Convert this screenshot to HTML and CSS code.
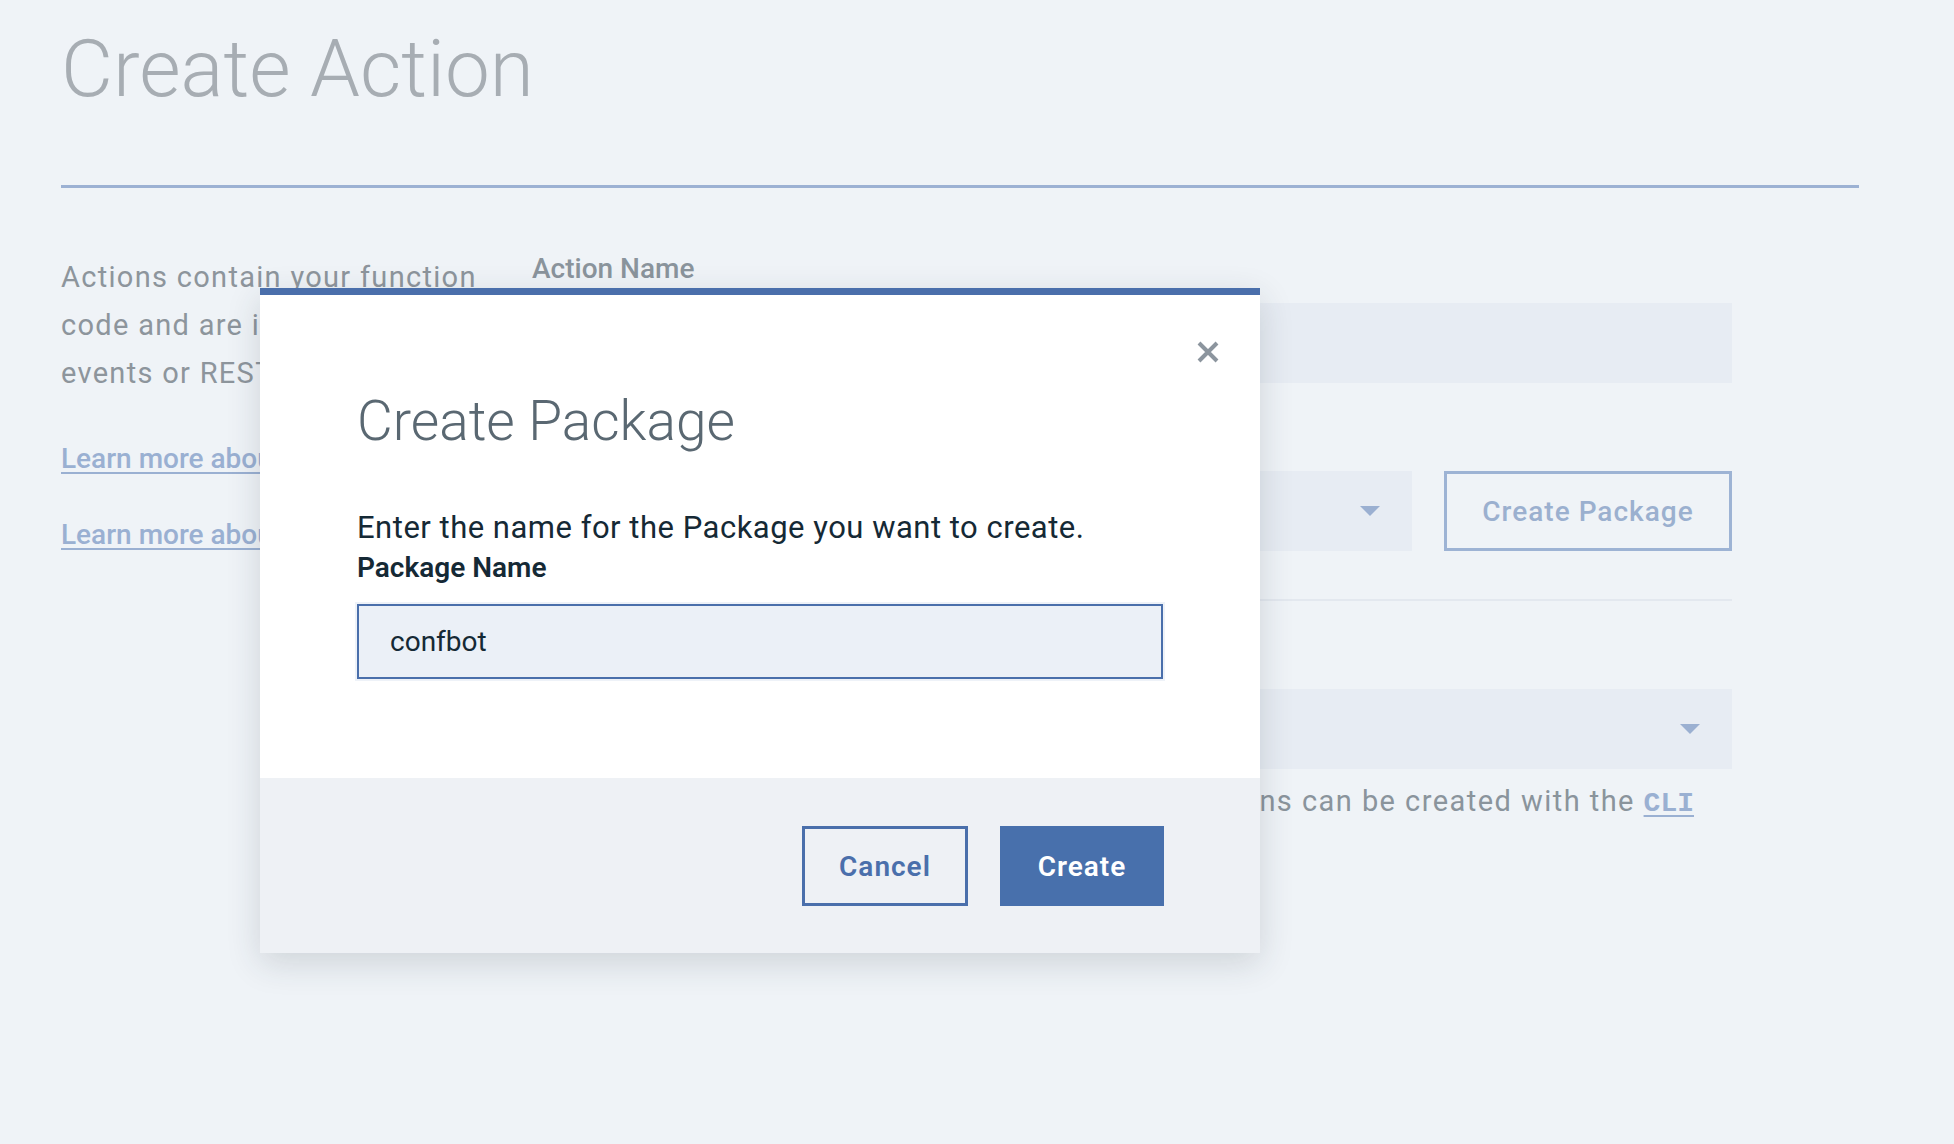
FILE: index.html
```html
<!DOCTYPE html>
<html lang="en">
<head>
<meta charset="utf-8">
<title>Create Action</title>
<link rel="stylesheet" href="styles.css">
</head>
<body>
<main class="page">
  <h1 class="page-title">Create Action</h1>
  <hr class="page-rule">
  <section class="content">
    <div class="intro">
      <p class="intro-text">Actions contain your function code and are invoked via events or REST API calls.</p>
      <p class="intro-link"><a href="#">Learn more about Actions</a></p>
      <p class="intro-link"><a href="#">Learn more about Packages</a></p>
    </div>
    <form class="form">
      <div class="field">
        <label class="label">Action Name</label>
        <div class="text-input"></div>
      </div>
      <div class="field field-gap">
        <label class="label">Enclosing Package</label>
        <div class="row">
          <div class="select"><span class="select-value">(Default Package)</span><span class="caret"></span></div>
          <button type="button" class="btn-ghost">Create Package</button>
        </div>
      </div>
      <div class="divider"></div>
      <div class="field field-gap">
        <label class="label">Runtime</label>
        <div class="select"><span class="select-value">Node.js 8</span><span class="caret"></span></div>
      </div>
      <p class="help">Java, Go, Docker, native binary, and Sequence actions can be created with the <a href="#" class="code-link">CLI</a></p>
    </form>
  </section>
</main>

<div class="modal" role="dialog">
  <div class="modal-body">
    <button type="button" class="modal-close" aria-label="Close">
      <svg width="24" height="24" viewBox="0 0 24 24"><path d="M3 3 L21 21 M21 3 L3 21" stroke="#8c959e" stroke-width="4" fill="none"/></svg>
    </button>
    <h2 class="modal-title">Create Package</h2>
    <p class="modal-desc">Enter the name for the Package you want to create.</p>
    <label class="modal-label">Package Name</label>
    <div class="modal-input">confbot</div>
  </div>
  <div class="modal-footer">
    <button type="button" class="btn-secondary">Cancel</button>
    <button type="button" class="btn-primary">Create</button>
  </div>
</div>
</body>
</html>
```

FILE: styles.css
```css
* { box-sizing: border-box; }

html, body {
  margin: 0;
  padding: 0;
}

body {
  background: #eff3f7;
  font-family: "Roboto", "Liberation Sans", sans-serif;
  width: 1954px;
  height: 1144px;
  overflow: hidden;
  position: relative;
}

.page {
  padding: 22px 95px 0 61px;
}

.page-title {
  margin: 0;
  font-size: 80px;
  line-height: 94px;
  font-weight: 300;
  color: #a7adb3;
}

.page-rule {
  margin: 69px 0 0;
  border: 0;
  height: 3px;
  background: #9cb1d3;
}

.content {
  display: grid;
  grid-template-columns: 440px 1200px;
  column-gap: 31px;
  margin-top: 65px;
}

.intro-text {
  margin: 0;
  font-size: 29px;
  line-height: 48px;
  letter-spacing: 1.3px;
  color: #8d959c;
}

.intro-link {
  margin: 0;
  font-size: 28px;
  line-height: 40px;
  font-weight: 500;
}

.intro-text + .intro-link { margin-top: 42px; }
.intro-link + .intro-link { margin-top: 36px; }

.intro-link a {
  color: #9ab0d2;
  text-decoration: underline;
  text-underline-offset: 4px;
  text-decoration-thickness: 2px;
}

.form {
  display: flex;
  flex-direction: column;
}

.field {
  display: flex;
  flex-direction: column;
}

.field-gap { margin-top: 38px; }

.label {
  font-size: 28px;
  line-height: 32px;
  font-weight: 500;
  color: #8a949c;
  margin-bottom: 18px;
}

.text-input {
  height: 80px;
  background: #e7ecf3;
}

.row {
  display: flex;
  gap: 32px;
}

.select {
  flex: 1 0 auto;
  height: 80px;
  background: #e7ecf3;
  display: flex;
  align-items: center;
  justify-content: space-between;
  padding: 0 32px;
  font-size: 28px;
  color: #8d959c;
}

.field > .select { flex: none; }

.caret {
  width: 0;
  height: 0;
  border-left: 10px solid transparent;
  border-right: 10px solid transparent;
  border-top: 10px solid #9bb0d1;
}

.btn-ghost {
  width: 288px;
  height: 80px;
  background: transparent;
  border: 3px solid #9db3d4;
  color: #9bb0cf;
  font-family: inherit;
  font-size: 28px;
  font-weight: 500;
  letter-spacing: 1px;
}

.divider {
  height: 2px;
  background: #e3e8ef;
  margin-top: 48px;
}

.help {
  margin: 12px 0 0;
  font-size: 29px;
  line-height: 40px;
  letter-spacing: 1.45px;
  color: #8a949c;
  white-space: nowrap;
}

.code-link {
  font-family: "Liberation Mono", monospace;
  font-weight: 700;
  font-size: 28px;
  letter-spacing: 0;
  color: #9ab0d2;
  text-decoration: underline;
  text-underline-offset: 4px;
  text-decoration-thickness: 2px;
}

/* Modal */
.modal {
  position: absolute;
  left: 260px;
  top: 288px;
  width: 1000px;
  border-top: 7px solid #4a6fab;
  background: #ffffff;
  box-shadow: 0 10px 32px rgba(40, 50, 60, 0.16);
}

.modal-body {
  position: relative;
  padding: 94px 97px 99px;
  background: #ffffff;
}

.modal-close {
  position: absolute;
  top: 45px;
  right: 40px;
  width: 24px;
  height: 24px;
  padding: 0;
  border: 0;
  background: transparent;
}

.modal-close svg { display: block; }

.modal-title {
  margin: 0;
  font-size: 55px;
  line-height: 64px;
  font-weight: 300;
  color: #5a6872;
}

.modal-desc {
  margin: 55px 0 0;
  font-size: 31px;
  line-height: 40px;
  letter-spacing: 0.5px;
  color: #152935;
}

.modal-label {
  display: block;
  margin-top: 4px;
  font-size: 28px;
  line-height: 32px;
  font-weight: 600;
  color: #152935;
}

.modal-input {
  margin-top: 20px;
  height: 75px;
  background: #ebf0f7;
  border: 2px solid #4a6fab;
  box-shadow: 0 0 0 2px #eef2f8;
  display: flex;
  align-items: center;
  padding-left: 31px;
  font-size: 28px;
  color: #152935;
}

.modal-footer {
  height: 175px;
  background: #eef1f5;
  display: flex;
  justify-content: flex-end;
  align-items: flex-start;
  gap: 32px;
  padding: 48px 96px 0 0;
}

.btn-secondary,
.btn-primary {
  height: 80px;
  font-family: inherit;
  font-size: 28px;
  font-weight: 600;
  letter-spacing: 1px;
}

.btn-secondary {
  width: 166px;
  background: transparent;
  border: 3px solid #4a6fab;
  color: #4a6fab;
}

.btn-primary {
  width: 164px;
  background: #4870ac;
  border: 0;
  color: #ffffff;
}
```
